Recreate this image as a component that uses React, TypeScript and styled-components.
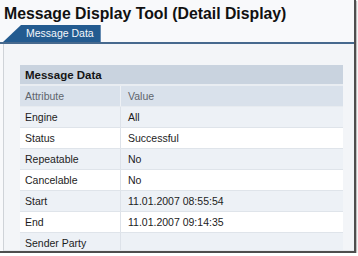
import React from "react";
import styled, { createGlobalStyle } from "styled-components";

const Global = createGlobalStyle`
  html, body { margin: 0; padding: 0; background: #ffffff; }
  body { font-family: "Liberation Sans", Arial, sans-serif; }
`;

const Frame = styled.div`
  width: 354px;
  height: 251px;
  background: #f8f9fb;
  border-right: 2px solid #4e4e4e;
  border-bottom: 2px solid #4e4e4e;
  box-shadow: 1px 1px 1px rgba(0, 0, 0, 0.25);
  display: flex;
  flex-direction: column;
  overflow: hidden;
`;

const Title = styled.h1`
  margin: 0;
  padding: 5px 0 0 4px;
  height: 20px;
  font-size: 15.8px;
  font-weight: bold;
  color: #111;
  line-height: 18px;
  white-space: nowrap;
`;

const TabStrip = styled.div`
  display: flex;
  padding-left: 3px;
  border-bottom: 2px solid #46698e;
  height: 17px;
`;

const Tab = styled.div`
  background: #235b90;
  color: #f4f7fb;
  font-size: 10.5px;
  line-height: 17px;
  padding: 0 7px 0 23px;
  clip-path: polygon(18px 0, 100% 0, 100% 100%, 0 100%);
  white-space: nowrap;
`;

const Panel = styled.div`
  flex: 1;
  margin-left: 3px;
  border-left: 1px solid #cfd3d8;
  border-bottom: 1px solid #e4e7eb;
  background: #f3f5f8;
  padding: 21px 10px 0 16px;
  overflow: hidden;
`;

const Table = styled.table`
  width: 323px;
  border-collapse: collapse;
  font-size: 10.5px;
  color: #1c1c1c;
`;

const Caption = styled.th`
  background: #c9d3df;
  height: 19px;
  padding: 0 5px;
  text-align: left;
  font-size: 11.5px;
  font-weight: bold;
  color: #151515;
  border-bottom: 2px solid #e9edf2;
`;

const HeadCell = styled.th<{ $first?: boolean }>`
  background: #d9e1eb;
  height: 20px;
  padding: 0 ${(p) => (p.$first ? "5px" : "7px")};
  text-align: left;
  font-weight: normal;
  color: #5e646c;
  width: ${(p) => (p.$first ? "90px" : "auto")};
  border-right: ${(p) => (p.$first ? "1px solid #eef1f5" : "none")};
  border-bottom: 1px solid #e7ebf0;
`;

const Row = styled.tr<{ $alt: boolean }>`
  background: ${(p) => (p.$alt ? "#edf1f6" : "#ffffff")};
`;

const Cell = styled.td<{ $first?: boolean }>`
  height: 20px;
  padding: 0 ${(p) => (p.$first ? "5px" : "7px")};
  border-bottom: 1px solid #dfe4ea;
  border-right: ${(p) => (p.$first ? "1px solid #dde2e9" : "none")};
  white-space: nowrap;
`;

const rows: [string, string][] = [
  ["Engine", "All"],
  ["Status", "Successful"],
  ["Repeatable", "No"],
  ["Cancelable", "No"],
  ["Start", "11.01.2007 08:55:54"],
  ["End", "11.01.2007 09:14:35"],
  ["Sender Party", ""],
];

export default function App() {
  return (
    <>
      <Global />
      <Frame>
        <Title>Message Display Tool (Detail Display)</Title>
        <TabStrip>
          <Tab>Message Data</Tab>
        </TabStrip>
        <Panel>
          <Table>
            <thead>
              <tr>
                <Caption colSpan={2}>Message Data</Caption>
              </tr>
              <tr>
                <HeadCell $first>Attribute</HeadCell>
                <HeadCell>Value</HeadCell>
              </tr>
            </thead>
            <tbody>
              {rows.map(([a, v], i) => (
                <Row key={a} $alt={i % 2 === 0}>
                  <Cell $first>{a}</Cell>
                  <Cell>{v}</Cell>
                </Row>
              ))}
            </tbody>
          </Table>
        </Panel>
      </Frame>
    </>
  );
}
